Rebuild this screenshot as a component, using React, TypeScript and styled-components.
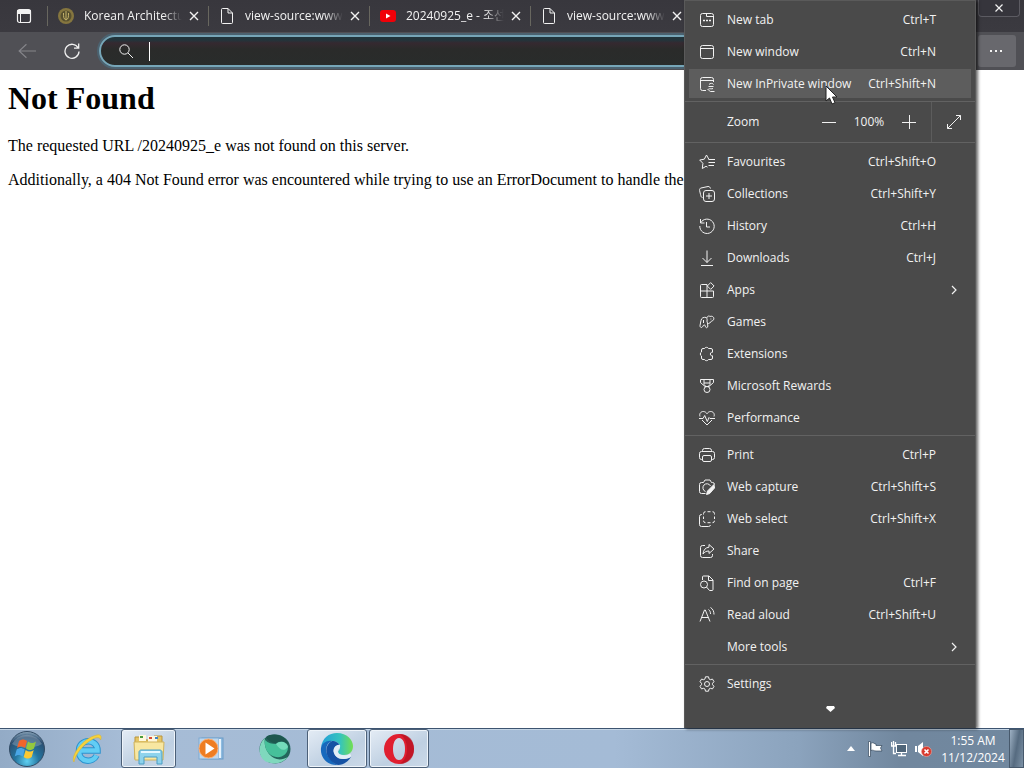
import React from "react";
import styled, { createGlobalStyle, css } from "styled-components";

const uiFont = `"Open Sans", "Noto Sans CJK KR", sans-serif`;

const GlobalStyle = createGlobalStyle`
  * { box-sizing: border-box; }
  body { margin: 0; overflow: hidden; background: #fff; }
  button, input { font: inherit; color: inherit; border: 0; background: none; padding: 0; margin: 0; outline: none; }
  h1, p { margin: 0; }
  svg { display: block; flex: none; }
`;

const Desktop = styled.div`
  position: relative;
  display: flex;
  flex-direction: column;
  height: 100vh;
  font-family: ${uiFont};
  font-size: 12px;
  line-height: 16px;
  color: #f2f2f2;
`;

/* ---------- browser chrome ---------- */

const TabStrip = styled.header`
  display: flex;
  align-items: center;
  height: 32px;
  background: linear-gradient(#38373d, #3b3a40);
  overflow: hidden;
`;

const TabActions = styled.button`
  display: grid;
  place-items: center;
  width: 47px;
  height: 32px;
`;

const Tab = styled.div`
  display: flex;
  align-items: center;
  flex: none;
  width: 161px;
  height: 20px;
  padding: 0 6px 0 10px;
  border-left: 1px solid #68675f;
`;

const TabTitle = styled.span`
  flex: 1;
  margin-left: 10px;
  white-space: nowrap;
  mask-image: linear-gradient(90deg, #000 78%, transparent 96%);
`;

const IconButton = styled.button`
  display: grid;
  place-items: center;
  width: 16px;
  height: 16px;
`;

const WindowClose = styled.button`
  display: grid;
  place-items: center;
  align-self: flex-start;
  width: 42px;
  height: 17px;
  margin: 0 4px 0 auto;
  border: 1px solid #5c5b62;
  border-top: 0;
  border-radius: 0 0 4px 4px;
  background: #36353c;
`;

const Toolbar = styled.div`
  display: flex;
  align-items: center;
  height: 38px;
  padding-right: 8px;
  background: #505055;
`;

const ToolButton = styled.button<{ $dim?: boolean }>`
  display: grid;
  place-items: center;
  width: 36px;
  height: 32px;
  margin-left: 9px;
  color: ${(p) => (p.$dim ? "#85858a" : "#f0f0f0")};
`;

const AddressBar = styled.div`
  display: flex;
  align-items: center;
  flex: 1;
  height: 32px;
  margin-left: 9px;
  padding-left: 17px;
  border: 2px solid #76a6b8;
  border-radius: 16px;
  background: linear-gradient(#22343b 0, #22343b 3px, #352930 6px, #2a2b2a 12px, #292c2b 100%);
  box-shadow: 0 0 0 2px #4b6270;
`;

const Caret = styled.span`
  width: 1px;
  height: 19px;
  margin-left: 15px;
  background: #fff;
`;

const AddressInput = styled.input`
  flex: 1;
  min-width: 0;
  height: 24px;
`;

const MoreButton = styled.button`
  display: grid;
  place-items: center;
  width: 38px;
  height: 32px;
  margin-left: 8px;
  padding-right: 2px;
  border-radius: 3px;
  background: #68686d;
`;

/* ---------- page ---------- */

const Page = styled.main`
  flex: 1;
  min-height: 0;
  padding: 9px 8px;
  overflow: hidden;
  background: #fff;
  color: #000;
  font-family: "Liberation Serif", serif;
  font-size: 16px;
  line-height: 18px;
  white-space: nowrap;
`;

const PageTitle = styled.h1`
  font-size: 32px;
  line-height: 38px;
  margin-bottom: 20px;
`;

const Paragraph = styled.p`
  margin-bottom: 16px;
`;

/* ---------- menu ---------- */

const MenuPanel = styled.nav`
  position: absolute;
  top: 0;
  right: 48px;
  bottom: 40px;
  display: flex;
  flex-direction: column;
  width: 292px;
  border: 1px solid #5a5a5a;
  border-bottom: 0;
  background: #4a4a4a;
  box-shadow: 2px 1px 3px rgba(0, 0, 0, 0.6);
`;

const MenuGroup = styled.div`
  padding: 3px 4px 1px;
  & + & {
    border-top: 1px solid #626262;
  }
`;

const MenuRow = styled.button<{ $active?: boolean }>`
  position: relative;
  display: flex;
  align-items: center;
  width: 100%;
  height: 32px;
  padding: 0 35px 0 10px;
  text-align: left;
  ${(p) =>
    p.$active &&
    css`
      background: linear-gradient(transparent 1px, #5d5d5d 1px, #5d5d5d 30px, transparent 30px);
    `}
`;

const IconSlot = styled.span`
  width: 16px;
  height: 16px;
  margin-right: 12px;
`;

const RowLabel = styled.span`
  flex: 1;
  white-space: nowrap;
`;

const Shortcut = styled.kbd`
  font-family: inherit;
  white-space: nowrap;
`;

const Submenu = styled.span`
  margin-right: -26px;
`;

const ZoomRow = styled.div`
  display: flex;
  align-items: center;
  height: 42px;
  padding-left: 42px;
  border-top: 1px solid #626262;
  border-bottom: 1px solid #626262;
`;

const ZoomButton = styled.button`
  display: grid;
  place-items: center;
  width: 34px;
  height: 32px;
`;

const ZoomValue = styled.output`
  width: 46px;
  text-align: center;
`;

const FullscreenButton = styled.button`
  display: grid;
  place-items: center;
  align-self: stretch;
  width: 44px;
  margin-left: 5px;
  border-left: 1px solid #5c5c5c;
`;

const ScrollMore = styled.button`
  display: flex;
  justify-content: center;
  padding-top: 5px;
`;

const Pointer = styled.svg`
  position: absolute;
  left: 136px;
  top: 17px;
`;

/* ---------- taskbar ---------- */

const Taskbar = styled.footer`
  display: flex;
  align-items: center;
  height: 40px;
  border-top: 1px solid #3d5470;
  box-shadow: inset 0 1px 0 #c5d6e6;
  background: linear-gradient(90deg, #93abc6 0, #a6bcd6 12%, #a4bbd6 60%, #8ba3bd 78%, #71879e 88%, #71889f 100%);
`;

const TaskButton = styled.button<{ $width: number; $open?: boolean }>`
  display: grid;
  place-items: center;
  width: ${(p) => p.$width}px;
  height: 39px;
  ${(p) =>
    p.$open &&
    css`
      margin: 0 1px;
      border: 1px solid #4c6078;
      border-radius: 3px;
      box-shadow: inset 0 0 0 1px #eef4fa;
      background: linear-gradient(150deg, #e4ecf5, #bfd0e2 60%, #cbd9e8);
    `}
`;

const Tray = styled.div`
  display: flex;
  align-items: center;
  margin-left: auto;
  height: 39px;
`;

const TrayButton = styled.button`
  display: grid;
  place-items: center;
  width: 24px;
  height: 24px;
`;

const Clock = styled.time`
  width: 72px;
  margin-left: 2px;
  text-align: center;
  line-height: 17px;
  color: #fff;
`;

const ShowDesktop = styled.button`
  width: 15px;
  height: 39px;
  border: 1px solid #47596c;
  background: linear-gradient(100deg, #9db0c3, #566b80 50%, #7d92a6);
`;

/* ---------- icons ---------- */

const paths: Record<string, React.ReactNode> = {
  newTab: (
    <>
      <rect x="1.5" y="1.5" width="13" height="13" rx="2" />
      <path d="M7.500 1.500V4.500H14.500" />
      <path d="M4 8.500h2M7 8.500h2M10 8.500h2" strokeWidth="1.600" />
    </>
  ),
  newWindow: (
    <>
      <rect x="1.5" y="1.5" width="13" height="13" rx="2" />
      <path d="M1.500 4.500h13" />
    </>
  ),
  inPrivate: (
    <>
      <path d="M7 14.500H3.500a2 2 0 0 1-2-2v-9a2 2 0 0 1 2-2h9a2 2 0 0 1 2 2V6M1.500 4.500h13" />
      <path d="M10 8.500c1-1.500 4-1.500 4.500 0M9.500 10.500h5M14 12.500c-1.500.8-3-.2-4.500.5M8.500 13.500c1.500-.5 1.500 2 3 2h4" />
    </>
  ),
  star: <path d="M9.800 5.200 7.500 1 5.300 5.200.7 6l3.200 3.300-.6 5.200 3.700-2.200 1.500.8M9.500 5.500H16M9.500 8.500H16M9.500 11.500H15" />,
  collections: (
    <>
      <path d="M3.500 11.500C2 11.500 2 10 1.500 8.500L.6 4.500C.4 3 1 2.300 2 2l7-1.500c1.500-.2 2 .8 2.500 2" />
      <rect x="4.5" y="4.5" width="11" height="11" rx="2.500" />
      <path d="M10 7v6M7 10h6" />
    </>
  ),
  history: <path d="M1.500 1v4h4M1.700 4.800A7.200 7.200 0 1 1 .8 8M7.500 4v5H11" />,
  download: <path d="M8 .5v12M3.500 8 8 12.500 12.500 8M2 15.500h12" />,
  apps: <path d="M8 2.500H2.500a1 1 0 0 0-1 1v11a1 1 0 0 0 1 1h11a1 1 0 0 0 1-1V9h-13M8 2.500v13M11.700.6l3.400 3.400-3.400 3.400L8.300 4z" />,
  games: (
    <>
      <path d="M7.500 3.500c-3-.6-5 .3-5.500 3L1 11.500c-.2 2 2 3 3 .5.500-1.300 2-1.500 2.300 0 .4 2.500 2.700 2 2.500 0L8.500 9" />
      <path d="M8.200 5.800C7 3.500 9 1 11 2.500c2.500-1 4.700 1 3.500 3.300-1 1.800-3 1-3 2.700L9.500 9.500C8 9 7.700 7.500 8.200 5.800M4.500 6v3M11.500 5h.8" />
    </>
  ),
  extensions: <path d="M5.500 2.500a2.200 2 0 0 1 4 0H12a1.500 1.500 0 0 1 1.500 1.500v2.300h-.8a1.800 1.800 0 0 0 0 3.500h.8V12a1.500 1.500 0 0 1-1.500 1.500H9.500a2.200 2 0 0 1-4 0H4A1.500 1.500 0 0 1 2.500 12v-2a2 2.200 0 0 1 0-4V4A1.500 1.500 0 0 1 4 2.500z" />,
  rewards: (
    <>
      <path d="M1.500 1.500h13v3L10 8.500H6l-4.500-4zM5 1.500v5l2 2M11 1.500v5l-2 2M5 5h6" />
      <circle cx="8" cy="11.500" r="3" />
    </>
  ),
  performance: (
    <>
      <path d="M1 6.500C0 3.500 2 1.500 4.300 1.500 6 1.500 7.200 2.500 8 3.700c.8-1.200 2-2.200 3.700-2.200C14 1.500 16 3.500 15 6.500M3 10l5 5 5-5" />
      <path d="M0 8.500h4l1.700-3 2.600 6 1.700-4 1 1h5" />
    </>
  ),
  print: (
    <>
      <path d="M3.500 12.500h-1a2 2 0 0 1-2-2v-4a2 2 0 0 1 2-2h11a2 2 0 0 1 2 2v4a2 2 0 0 1-2 2h-1M3.500 4.500v-1a2 2 0 0 1 2-2h5a2 2 0 0 1 2 2v1" />
      <rect x="3.5" y="8.5" width="9" height="6" rx="1.500" />
    </>
  ),
  capture: (
    <>
      <path d="M6.500 14.500h-4a2 2 0 0 1-2-2v-7a2 2 0 0 1 2-2h2L6 1h5l1.500 2.500h1a2 2 0 0 1 2 2M11.500 7a4 4 0 1 0-5 5.500" />
      <path d="M15 5.500 8.500 12 7.500 15.500l3.200-1 4.800-5.500z" fill="currentColor" />
    </>
  ),
  select: (
    <>
      <path d="M3 3.500H2.500a2 2 0 0 0-2 2v8a2 2 0 0 0 2 2h7a2 2 0 0 0 2-1.500" />
      <path d="M4.500 3.500v-.8a2 2 0 0 1 2-2M8.500.7h3M13.500.7a2 2 0 0 1 2 2v.8M15.500 5.500v2.500M15.500 9.700a2 2 0 0 1-2 2M11.500 11.700h-3M6.500 11.700a2 2 0 0 1-2-2M4.500 8V5.500" />
    </>
  ),
  share: <path d="M6 2.500H3.500a2 2 0 0 0-2 2v8a2 2 0 0 0 2 2h8a2 2 0 0 0 2-2V11M10 1.500l5 4.500-5 4.500V8c-3 0-4.500 1-6 3 .3-4 2.500-6.500 6-6.800z" />,
  find: (
    <>
      <path d="M3.500 5V2a1 1 0 0 1 1-1H10l4 4v9.500a1 1 0 0 1-1 1H10.500M9.500 1v4.500H14" />
      <circle cx="5" cy="9.500" r="3.500" />
      <path d="m7.500 12 3 3.500" />
    </>
  ),
  read: <path d="M1 14.500 5.500 3h.8L11 14.500M2.500 10.500h7M9.500 2.500c1.500 1 2 2.500 2 4.500M11.500.5c2.500 1.500 3.500 4 3.500 7" />,
  settings: (
    <>
      <circle cx="8" cy="8" r="2.500" />
      <path d="M6.500.8h3l.5 2.100 1.300.8 2.200-.6L15 5.700l-1.500 1.600v1.400l1.500 1.600-1.500 2.600-2.200-.6-1.300.8-.5 2.100h-3L6 13.100l-1.300-.8-2.200.6L1 10.300l1.500-1.600V7.300L1 5.700l1.500-2.600 2.200.6L6 2.900z" strokeLinejoin="round" />
    </>
  ),
  close: <path d="m4 4 8 8M12 4l-8 8" strokeWidth="1.400" />,
  chevron: <path d="m6 4 4 4-4 4" strokeWidth="1.200" />,
  minus: <path d="M1 8.500h14" />,
  plus: <path d="M1 8.500h14M8.500 1v14" />,
  expand: <path d="M10 1.500h4.500V6M14.500 1.500l-13 13M1.500 10v4.500H6" />,
  page: <path d="M3.500.5H9l4.500 4.500v9.500a1 1 0 0 1-1 1h-9a1 1 0 0 1-1-1v-13a1 1 0 0 1 1-1M9 .5V5h4.500" />,
  back: <path d="M16 8H1M7.500 2 1 8l6.500 6" />,
  reload: <path d="M14.200 5A7 7 0 1 0 15 8.500M14.700.5v4.700H10" strokeWidth="1.300" />,
  search: (
    <>
      <circle cx="6.500" cy="6.500" r="4.700" />
      <path d="m10 10 5 5" />
    </>
  ),
  more: <path d="M2 8h2M7 8h2M12 8h2" strokeWidth="2" />,
  tabActions: (
    <>
      <rect x="1.5" y="1.5" width="13" height="13" rx="2" strokeWidth="1.200" />
      <path d="M1.500 2.500h13v3h-13z" fill="currentColor" />
      <path d="M4.500 5v9" />
    </>
  ),
};

const Icon = ({ name, size = 16 }: { name: string; size?: number }) => (
  <svg width={size} height={size} viewBox="0 0 16 16" fill="none" stroke="currentColor" aria-hidden="true">
    {paths[name]}
  </svg>
);

const SealIcon = () => (
  <svg width="16" height="16" viewBox="0 0 16 16" aria-hidden="true">
    <circle cx="8" cy="8" r="8" fill="#85763f" />
    <circle cx="8" cy="8" r="5.500" fill="#57502f" />
    <path d="M8 3v9M5.500 5c0 4 0 6 2.500 7 2.500-1 2.500-3 2.500-7" stroke="#c4b26a" strokeWidth="1" fill="none" />
  </svg>
);

const VideoIcon = () => (
  <svg width="16" height="16" viewBox="0 0 16 16" aria-hidden="true">
    <rect y="2" width="16" height="12" rx="3" fill="#f00008" />
    <path d="M6 5.500v5L10.500 8z" fill="#fff" />
  </svg>
);

const StartOrb = () => (
  <svg width="38" height="38" viewBox="0 0 38 38" aria-hidden="true">
    <defs>
      <radialGradient id="orb" cx="50%" cy="85%" r="85%">
        <stop offset="0" stopColor="#5fd0f2" />
        <stop offset=".4" stopColor="#24759f" />
        <stop offset=".8" stopColor="#2b4f72" />
        <stop offset="1" stopColor="#8fa9bd" />
      </radialGradient>
    </defs>
    <circle cx="19" cy="19" r="17.500" fill="url(#orb)" stroke="#324b64" />
    <path d="M4 14a16 14 0 0 1 30 0c-9 5-21 5-30 0" fill="#fff" opacity=".22" />
    <path d="M11 11c3-2 5-2 8 0l-2 7c-3-2-5-2-8 0z" fill="#f0642c" />
    <path d="M20 11.500c3 2 5 2 8 0l-2 7c-3 2-5 2-8 0z" fill="#93c83e" />
    <path d="M8.700 19.500c3-2 5-2 8 0l-2 7c-3-2-5-2-8 0z" fill="#4aa6e6" />
    <path d="M17.700 20c3 2 5 2 8 0l-2 7c-3 2-5 2-8 0z" fill="#fbc934" />
  </svg>
);

const ExplorerE = () => (
  <svg width="34" height="34" viewBox="0 0 34 34" fill="none" aria-hidden="true">
    <path d="M10 18.500H27.500C27.500 6 9 6 9 19c0 12 14 12 17.500 4.500" stroke="#2b93cf" strokeWidth="6.500" />
    <path d="M10 18.500H27.500C27.500 6 9 6 9 19c0 12 14 12 17.500 4.500" stroke="#62cdf4" strokeWidth="4.500" />
    <path d="M4 30C0 25 12 6 27 3c4-1 5 2 3.500 5C30 5 27 5 23 7 13 12 5 23 4 30" fill="#f7d23c" stroke="#d7b02c" strokeWidth=".5" />
  </svg>
);

const FolderIcon = () => (
  <svg width="34" height="34" viewBox="0 0 34 34" aria-hidden="true">
    <path d="M3 5h9l2 3h8V4h8v23H3z" fill="#e6c565" stroke="#b8953e" />
    <path d="M7 3h7v6H7zM16 4h9v6h-9z" fill="#fff8dc" />
    <path d="M8 4h3v2H8z" fill="#4a9c3c" />
    <path d="M17 5h3v2h-3z" fill="#d84a35" />
    <path d="M23 5h3v2h-3z" fill="#3f82c4" />
    <path d="M2 10h30l-1 18H3z" fill="#f8e7a1" stroke="#d0b35c" />
    <path d="M7 32V20c0-1 1-2 2-2h19c1 0 2 1 2 2v12h-5v-7H12v7z" fill="#8ed3ec" stroke="#4b9dc4" />
    <path d="M9 20h19" stroke="#e5f8ff" strokeWidth="2" />
  </svg>
);

const PlayerIcon = () => (
  <svg width="30" height="30" viewBox="0 0 30 30" aria-hidden="true">
    <rect x="7" y="4" width="21" height="21" fill="#8fbce0" stroke="#6a9bc8" />
    <rect x="4" y="4" width="20" height="21" fill="#bfd8ee" stroke="#7faad2" />
    <path d="M25 5v19" stroke="#e8f3fc" strokeWidth="2" />
    <circle cx="13.500" cy="14.500" r="9.500" fill="#ee7d22" stroke="#f9b077" />
    <path d="M10.500 8.500v12l9-6z" fill="#fff" />
  </svg>
);

const GreenAppIcon = () => (
  <svg width="34" height="34" viewBox="0 0 34 34" aria-hidden="true">
    <ellipse cx="17" cy="17" rx="15.500" ry="14.500" fill="#23665c" />
    <path d="M7 6C-1 13 0 26 9 30c8 3 16 1 21-5-7 4-14 3-19-3C7 17 6 11 7 6" fill="#7fd8bd" />
    <path d="M7 8c3 3 7 4 11 4 4-4 11-2 12 3 0 7-6 11-12 10C10 24 6 16 7 8" fill="#46c09a" />
    <path d="M18 12c4-4 11-2 12 3-4 5-8 3-12-3" fill="#93ecd0" opacity=".6" />
    <path d="M8 5c7-5 20-2 23 8-4-4-9-5-13-2C14 11 10 9 8 5" fill="#1d574e" />
  </svg>
);

const EdgeIcon = () => (
  <svg width="34" height="34" viewBox="0 0 34 34" aria-hidden="true">
    <defs>
      <linearGradient id="edgeTop" x1="0" x2="1">
        <stop offset="0" stopColor="#239ed9" />
        <stop offset=".6" stopColor="#35c4bd" />
        <stop offset="1" stopColor="#72df50" />
      </linearGradient>
    </defs>
    <path d="M1 16C2 6 9 1 17 1c10 0 16 7 16 13 0 6-4 9-9 9-4 0-6-1-6-3 0-1 2-2 2-5 0-3-3-6-8-6-6 0-10 4-11 7" fill="url(#edgeTop)" />
    <path d="M1 16c1-5 6-8 11-7-5 2-7 7-5 13 2 5 6 9 11 11C8 34 0 26 1 16" fill="#1769bd" />
    <path d="M12 9c4 0 7 2 8 5-5-1-7 3-6 7 2 6 9 8 17 4-3 5-8 8-13 8C6 29 2 14 12 9" fill="#1552a4" />
    <path d="M18 20c-1-3 3-3 2-7-4-1-8 4-6 8 2 6 9 7 15 5 2-1 3-3 1-4-4 2-11 2-12-2" fill="#e2eef7" />
  </svg>
);

const OperaIcon = () => (
  <svg width="32" height="32" viewBox="0 0 32 32" aria-hidden="true">
    <path fillRule="evenodd" d="M16 1a15 15 0 1 0 0 30 15 15 0 0 0 0-30m0 4c4 0 6 5 6 11s-2 11-6 11-6-5-6-11 2-11 6-11" fill="#e01f30" />
    <path d="M16 1c11 0 15 7 15 15S27 31 16 31c5-2 8-8 8-15S21 3 16 1" fill="#ab1020" opacity=".6" />
  </svg>
);

/* ---------- data ---------- */

type Item = { icon?: string; label: string; keys?: string; sub?: boolean; active?: boolean };

const windowItems: Item[] = [
  { icon: "newTab", label: "New tab", keys: "Ctrl+T" },
  { icon: "newWindow", label: "New window", keys: "Ctrl+N" },
  { icon: "inPrivate", label: "New InPrivate window", keys: "Ctrl+Shift+N", active: true },
];

const featureItems: Item[] = [
  { icon: "star", label: "Favourites", keys: "Ctrl+Shift+O" },
  { icon: "collections", label: "Collections", keys: "Ctrl+Shift+Y" },
  { icon: "history", label: "History", keys: "Ctrl+H" },
  { icon: "download", label: "Downloads", keys: "Ctrl+J" },
  { icon: "apps", label: "Apps", sub: true },
  { icon: "games", label: "Games" },
  { icon: "extensions", label: "Extensions" },
  { icon: "rewards", label: "Microsoft Rewards" },
  { icon: "performance", label: "Performance" },
];

const pageItems: Item[] = [
  { icon: "print", label: "Print", keys: "Ctrl+P" },
  { icon: "capture", label: "Web capture", keys: "Ctrl+Shift+S" },
  { icon: "select", label: "Web select", keys: "Ctrl+Shift+X" },
  { icon: "share", label: "Share" },
  { icon: "find", label: "Find on page", keys: "Ctrl+F" },
  { icon: "read", label: "Read aloud", keys: "Ctrl+Shift+U" },
  { label: "More tools", sub: true },
];

const settingsItems: Item[] = [{ icon: "settings", label: "Settings" }];

const tabs = [
  { title: "Korean Architectu", icon: <SealIcon /> },
  { title: "view-source:www.", icon: <Icon name="page" /> },
  { title: "20240925_e - 조선", icon: <VideoIcon /> },
  { title: "view-source:www.", icon: <Icon name="page" /> },
];

const Group = ({ items }: { items: Item[] }) => (
  <MenuGroup>
    {items.map((item) => (
      <MenuRow key={item.label} $active={item.active}>
        <IconSlot>{item.icon && <Icon name={item.icon} />}</IconSlot>
        <RowLabel>{item.label}</RowLabel>
        {item.keys && <Shortcut>{item.keys}</Shortcut>}
        {item.sub && (
          <Submenu>
            <Icon name="chevron" />
          </Submenu>
        )}
        {item.active && (
          <Pointer width="14" height="20" viewBox="0 0 14 20" aria-hidden="true">
            <path d="M1 1v15l3.500-3 2.500 6 3-1.300L7.500 12H12z" fill="#fff" stroke="#222" />
          </Pointer>
        )}
      </MenuRow>
    ))}
  </MenuGroup>
);

export default function App() {
  return (
    <Desktop>
      <GlobalStyle />
      <TabStrip>
        <TabActions aria-label="Tab actions">
          <Icon name="tabActions" />
        </TabActions>
        {tabs.map((tab, i) => (
          <Tab key={i}>
            {tab.icon}
            <TabTitle>{tab.title}</TabTitle>
            <IconButton aria-label="Close tab">
              <Icon name="close" />
            </IconButton>
          </Tab>
        ))}
        <WindowClose aria-label="Close window">
          <Icon name="close" size={14} />
        </WindowClose>
      </TabStrip>
      <Toolbar>
        <ToolButton $dim aria-label="Back">
          <Icon name="back" size={18} />
        </ToolButton>
        <ToolButton aria-label="Reload">
          <Icon name="reload" />
        </ToolButton>
        <AddressBar>
          <Icon name="search" />
          <Caret />
          <AddressInput aria-label="Address" />
        </AddressBar>
        <MoreButton aria-label="Settings and more">
          <Icon name="more" />
        </MoreButton>
      </Toolbar>
      <Page>
        <PageTitle>Not Found</PageTitle>
        <Paragraph>The requested URL /20240925_e was not found on this server.</Paragraph>
        <Paragraph>
          Additionally, a 404 Not Found error was encountered while trying to use an ErrorDocument to handle the
        </Paragraph>
      </Page>
      <Taskbar>
        <TaskButton $width={54} aria-label="Start">
          <StartOrb />
        </TaskButton>
        <TaskButton $width={66} aria-label="Internet Explorer">
          <ExplorerE />
        </TaskButton>
        <TaskButton $width={55} $open aria-label="File Explorer">
          <FolderIcon />
        </TaskButton>
        <TaskButton $width={66} aria-label="Media Player">
          <PlayerIcon />
        </TaskButton>
        <TaskButton $width={63} aria-label="Web browser">
          <GreenAppIcon />
        </TaskButton>
        <TaskButton $width={60} $open aria-label="Edge">
          <EdgeIcon />
        </TaskButton>
        <TaskButton $width={60} $open aria-label="Opera">
          <OperaIcon />
        </TaskButton>
        <Tray>
          <TrayButton aria-label="Show hidden icons">
            <svg width="8" height="5" viewBox="0 0 8 5" aria-hidden="true">
              <path d="M0 5l4-5 4 5z" fill="#fff" />
            </svg>
          </TrayButton>
          <TrayButton aria-label="Action center">
            <svg width="16" height="16" viewBox="0 0 16 16" aria-hidden="true">
              <path d="M1.500.5h2v15h-2zM4 2c3-1 3 1 5 1v1.500h6l-1.500 2.500L15 10H9c-2 0-3-1.500-5-.5z" fill="#fff" stroke="#34485c" strokeWidth=".7" />
            </svg>
          </TrayButton>
          <TrayButton aria-label="Network">
            <svg width="16" height="16" viewBox="0 0 16 16" fill="none" stroke="#fff" aria-hidden="true">
              <rect x="5.5" y="3.5" width="10" height="8" fill="#4f6579" />
              <path d="M10.500 12v3M7 14.500h8M.5 1v4h4V1M2.500 0v12.500H5" strokeWidth="1.300" />
            </svg>
          </TrayButton>
          <TrayButton aria-label="Volume muted">
            <svg width="18" height="18" viewBox="0 0 18 18" aria-hidden="true">
              <path d="M1 6h2v6H1zM4 6l5-4v14l-5-4z" fill="#fff" />
              <circle cx="12.500" cy="11.500" r="5" fill="#d8392d" stroke="#f0aaa0" strokeWidth=".6" />
              <path d="m10.500 9.500 4 4m0-4-4 4" stroke="#fff" strokeWidth="1.600" />
            </svg>
          </TrayButton>
          <Clock>
            1:55 AM
            <br />
            11/12/2024
          </Clock>
          <ShowDesktop aria-label="Show desktop" />
        </Tray>
      </Taskbar>

      <MenuPanel aria-label="Settings and more">
        <Group items={windowItems} />
        <ZoomRow>
          <RowLabel>Zoom</RowLabel>
          <ZoomButton aria-label="Zoom out">
            <Icon name="minus" />
          </ZoomButton>
          <ZoomValue>100%</ZoomValue>
          <ZoomButton aria-label="Zoom in">
            <Icon name="plus" />
          </ZoomButton>
          <FullscreenButton aria-label="Full screen">
            <Icon name="expand" />
          </FullscreenButton>
        </ZoomRow>
        <Group items={featureItems} />
        <Group items={pageItems} />
        <Group items={settingsItems} />
        <ScrollMore aria-label="Scroll down">
          <svg width="9" height="6" viewBox="0 0 9 6" aria-hidden="true">
            <path d="M1 0h7l1 2-4.500 4L0 2z" fill="#fff" />
          </svg>
        </ScrollMore>
      </MenuPanel>
    </Desktop>
  );
}
